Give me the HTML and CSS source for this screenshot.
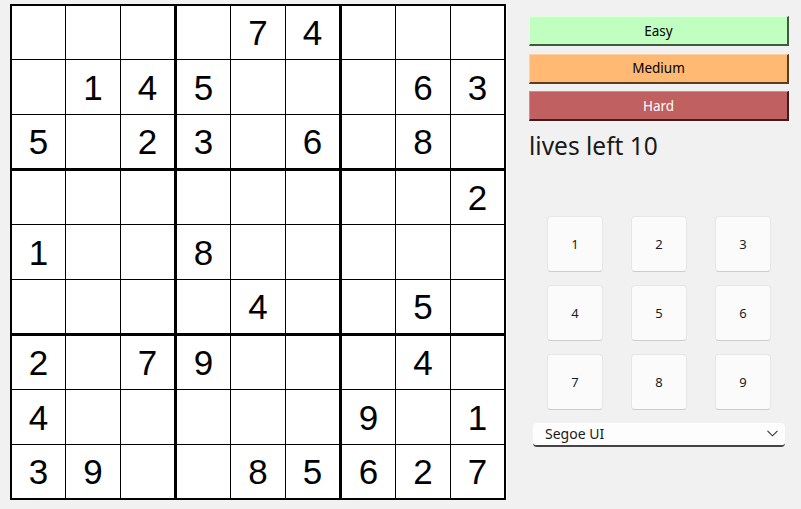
FILE: index.html
```html
<!DOCTYPE html>
<html>
<head>
<meta charset="utf-8">
<link rel="stylesheet" href="styles.css">
</head>
<body>
<div class="app">
  <div class="board">
    <div class="box">
      <div class="cell"></div><div class="cell"></div><div class="cell"></div>
      <div class="cell"></div><div class="cell">1</div><div class="cell">4</div>
      <div class="cell">5</div><div class="cell"></div><div class="cell">2</div>
    </div>
    <div class="box">
      <div class="cell"></div><div class="cell">7</div><div class="cell">4</div>
      <div class="cell">5</div><div class="cell"></div><div class="cell"></div>
      <div class="cell">3</div><div class="cell"></div><div class="cell">6</div>
    </div>
    <div class="box">
      <div class="cell"></div><div class="cell"></div><div class="cell"></div>
      <div class="cell"></div><div class="cell">6</div><div class="cell">3</div>
      <div class="cell"></div><div class="cell">8</div><div class="cell"></div>
    </div>
    <div class="box">
      <div class="cell"></div><div class="cell"></div><div class="cell"></div>
      <div class="cell">1</div><div class="cell"></div><div class="cell"></div>
      <div class="cell"></div><div class="cell"></div><div class="cell"></div>
    </div>
    <div class="box">
      <div class="cell"></div><div class="cell"></div><div class="cell"></div>
      <div class="cell">8</div><div class="cell"></div><div class="cell"></div>
      <div class="cell"></div><div class="cell">4</div><div class="cell"></div>
    </div>
    <div class="box">
      <div class="cell"></div><div class="cell"></div><div class="cell">2</div>
      <div class="cell"></div><div class="cell"></div><div class="cell"></div>
      <div class="cell"></div><div class="cell">5</div><div class="cell"></div>
    </div>
    <div class="box">
      <div class="cell">2</div><div class="cell"></div><div class="cell">7</div>
      <div class="cell">4</div><div class="cell"></div><div class="cell"></div>
      <div class="cell">3</div><div class="cell">9</div><div class="cell"></div>
    </div>
    <div class="box">
      <div class="cell">9</div><div class="cell"></div><div class="cell"></div>
      <div class="cell"></div><div class="cell"></div><div class="cell"></div>
      <div class="cell"></div><div class="cell">8</div><div class="cell">5</div>
    </div>
    <div class="box">
      <div class="cell"></div><div class="cell">4</div><div class="cell"></div>
      <div class="cell">9</div><div class="cell"></div><div class="cell">1</div>
      <div class="cell">6</div><div class="cell">2</div><div class="cell">7</div>
    </div>
  </div>

  <div class="panel">
    <button class="level easy">Easy</button>
    <button class="level medium">Medium</button>
    <button class="level hard">Hard</button>
    <div class="lives">lives left 10</div>
    <div class="pad">
      <button class="num">1</button><button class="num">2</button><button class="num">3</button>
      <button class="num">4</button><button class="num">5</button><button class="num">6</button>
      <button class="num">7</button><button class="num">8</button><button class="num">9</button>
    </div>
    <div class="select">
      <span class="select-text">Segoe UI</span>
      <svg class="chev" width="11" height="7" viewBox="0 0 11 7"><polyline points="0.5,0.8 5.5,5.8 10.5,0.8" fill="none" stroke="#333" stroke-width="1.1"/></svg>
    </div>
  </div>
</div>
</body>
</html>
```

FILE: styles.css
```css
html, body {
  margin: 0;
  padding: 0;
  background: #f1f1f1;
}

.app {
  display: flex;
  align-items: flex-start;
  padding: 4px 0 0 10px;
}

.board {
  display: grid;
  grid-template-columns: repeat(3, 162px);
  grid-template-rows: repeat(3, 162px);
  gap: 3px;
  padding: 2px;
  background: #000;
  box-shadow: 1px 1px 0 #fff;
}

.box {
  display: grid;
  grid-template-columns: 53px 54px 53px;
  grid-template-rows: 53px 54px 53px;
  gap: 1px;
  background: #000;
}

.cell {
  background: #fff;
  display: flex;
  align-items: center;
  justify-content: center;
  font-family: "Liberation Sans", Arial, sans-serif;
  font-size: 35px;
  line-height: 1;
  color: #000;
}

.panel {
  margin-left: 23px;
  width: 260px;
  padding-top: 12px;
  display: flex;
  flex-direction: column;
  font-family: "Noto Sans", "Open Sans", sans-serif;
}

.level {
  height: 30px;
  margin: 0 0 7.5px 0;
  padding: 0;
  font-family: "Noto Sans", "Open Sans", sans-serif;
  font-size: 13.5px;
  color: #000;
  border-style: solid;
  border-width: 1px 2px 2px 1px;
}

.easy {
  background: #c0ffc0;
  border-color: #dcffdc #3f5a3f #3f5a3f #dcffdc;
}

.medium {
  background: #ffb973;
  border-color: #ffd0a0 #5a3d1f #5a3d1f #ffd0a0;
}

.hard {
  background: #c06060;
  color: #fff;
  border-color: #d88a8a #401c1c #401c1c #d88a8a;
}

.lives {
  font-size: 24.5px;
  line-height: 30px;
  color: #1a1a1a;
  margin-top: 2px;
}

.pad {
  display: grid;
  grid-template-columns: repeat(3, 56px);
  grid-auto-rows: 56px;
  column-gap: 28px;
  row-gap: 13px;
  margin: 55px 0 0 18px;
}

.num {
  background: #fbfbfb;
  border: 1px solid #e6e6e6;
  border-bottom-color: #cdcdcd;
  border-radius: 4px;
  font-family: "Noto Sans", "Open Sans", sans-serif;
  font-size: 13px;
  color: #1b1b1b;
  padding: 0;
}

.select {
  margin: 13px 0 0 4px;
  width: 252px;
  height: 24px;
  box-sizing: border-box;
  background: #fdfdfd;
  border-radius: 4px;
  border-bottom: 2px solid #444;
  display: flex;
  align-items: center;
  justify-content: space-between;
  padding: 0 7px 0 12px;
}

.select-text {
  font-size: 14px;
  color: #1a1a1a;
}

.chev {
  display: block;
}
```
